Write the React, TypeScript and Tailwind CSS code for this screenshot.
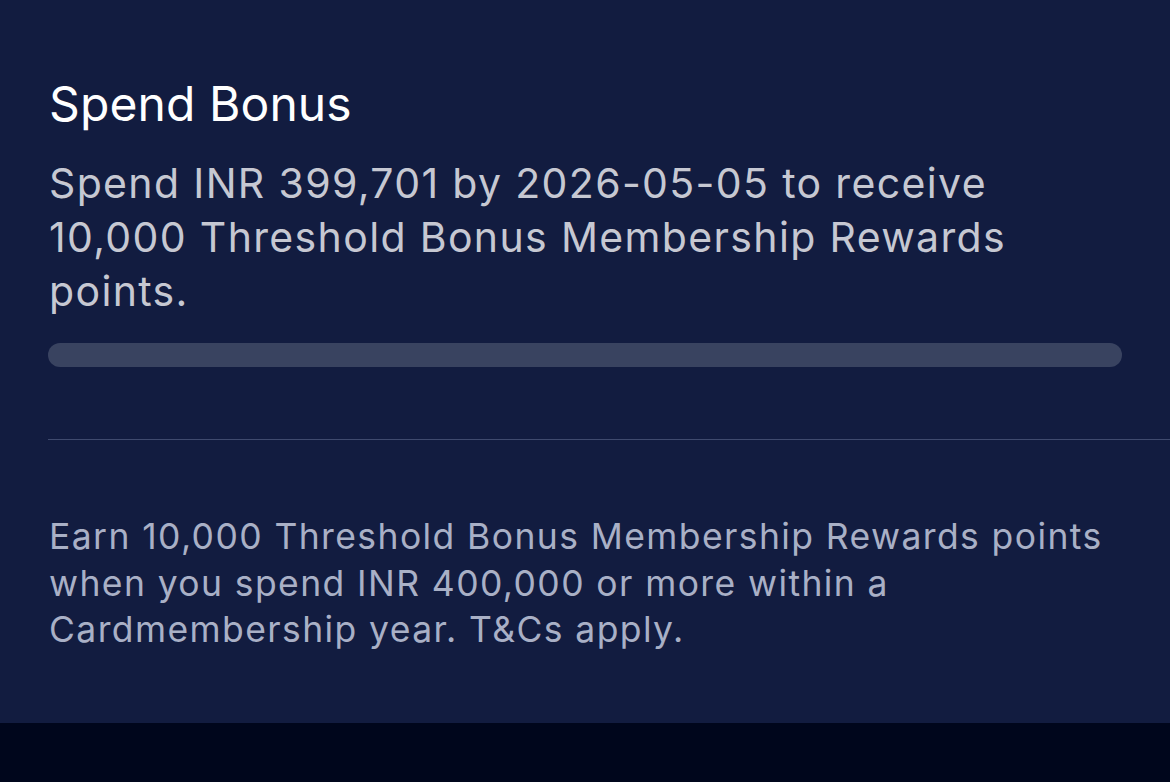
export default function App() {
  return (
    <div className="w-[1170px] h-[782px] bg-[#00061c] flex flex-col overflow-hidden" style={{ fontFamily: 'Inter, "Liberation Sans", sans-serif' }}>
      <section className="h-[723px] bg-[#121c40] shrink-0 flex flex-col pl-[48px]">
        <div className="pr-[48px] pt-[76px]">
          <h2 className="pl-[1px] text-[48px] leading-[56px] text-white tracking-[0.1px]">Spend Bonus</h2>
          <p className="mt-[24px] pl-[1px] text-[41px] leading-[54px] text-[#c6c8d2] tracking-[1.35px]">
            Spend INR 399,701 by 2026-05-05 to receive 10,000 Threshold Bonus Membership Rewards points.
          </p>
          <div className="mt-[25px] h-[24px] rounded-full bg-[#394360]" />
        </div>
        <div className="mt-[72px] h-px bg-[#3f4a6e]" />
        <p className="mt-[74px] pl-[1px] pr-[40px] text-[35.5px] leading-[46.5px] text-[#a9b0c6] tracking-[1.4px]">
          Earn 10,000 Threshold Bonus Membership Rewards points when you spend INR 400,000 or more within a Cardmembership year. T&amp;Cs apply.
        </p>
      </section>
    </div>
  );
}
